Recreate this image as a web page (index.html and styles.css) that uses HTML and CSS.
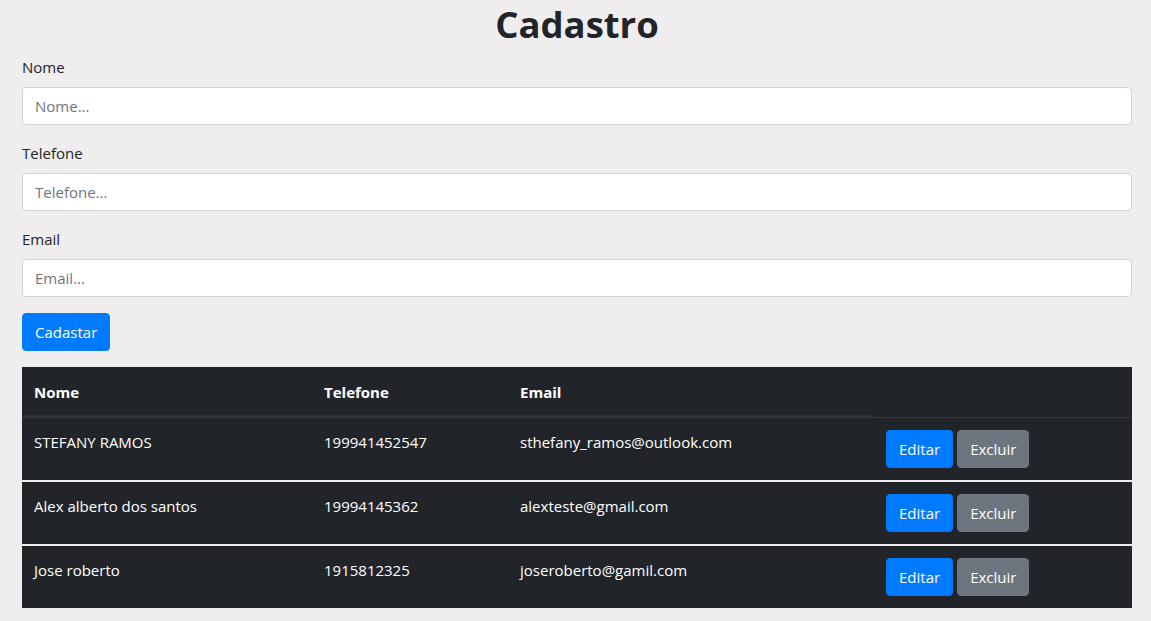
FILE: index.html
```html
<!DOCTYPE html>
<html lang="pt-BR">
<head>
<meta charset="utf-8">
<title>Cadastro</title>
<link rel="stylesheet" href="styles.css">
</head>
<body>
<div class="container">
  <h1 class="title">Cadastro</h1>
  <form class="form">
    <div class="form-group">
      <label class="label" for="nome">Nome</label>
      <input class="input" id="nome" type="text" placeholder="Nome...">
    </div>
    <div class="form-group">
      <label class="label" for="tel">Telefone</label>
      <input class="input" id="tel" type="text" placeholder="Telefone...">
    </div>
    <div class="form-group">
      <label class="label" for="email">Email</label>
      <input class="input" id="email" type="text" placeholder="Email...">
    </div>
    <button type="button" class="btn btn-primary">Cadastar</button>
  </form>
  <table class="table">
    <colgroup>
      <col class="c1"><col class="c2"><col class="c3"><col class="c4">
    </colgroup>
    <thead>
      <tr><th>Nome</th><th>Telefone</th><th>Email</th></tr>
    </thead>
    <tbody>
      <tr>
        <td>STEFANY RAMOS</td>
        <td>199941452547</td>
        <td>sthefany_ramos@outlook.com</td>
        <td><div class="actions"><button class="btn btn-primary">Editar</button><button class="btn btn-secondary">Excluir</button></div></td>
      </tr>
      <tr>
        <td>Alex alberto dos santos</td>
        <td>19994145362</td>
        <td>alexteste@gmail.com</td>
        <td><div class="actions"><button class="btn btn-primary">Editar</button><button class="btn btn-secondary">Excluir</button></div></td>
      </tr>
      <tr>
        <td>Jose roberto</td>
        <td>1915812325</td>
        <td>joseroberto@gamil.com</td>
        <td><div class="actions"><button class="btn btn-primary">Editar</button><button class="btn btn-secondary">Excluir</button></div></td>
      </tr>
    </tbody>
  </table>
</div>
</body>
</html>
```

FILE: styles.css
```css
* { box-sizing: border-box; }
html, body {
  margin: 0;
  padding: 0;
  background: #efeded;
}
body {
  font-family: "Open Sans", "Noto Sans", sans-serif;
  font-size: 15px;
  line-height: 24px;
  color: #212529;
}
.container {
  width: 1110px;
  margin-left: 22px;
}
.title {
  margin: 0 0 7px;
  font-size: 36.5px;
  line-height: 48px;
  font-weight: 700;
  text-align: center;
  color: #212529;
}
.form-group {
  margin-bottom: 16px;
}
.label {
  display: block;
  margin-bottom: 8px;
}
.input {
  display: block;
  width: 100%;
  height: 38px;
  padding: 6px 12px;
  font-family: inherit;
  font-size: 15px;
  line-height: 24px;
  color: #495057;
  background: #fff;
  border: 1px solid #ced4da;
  border-radius: 4px;
  outline: none;
}
.input::placeholder {
  color: #6c757d;
  opacity: 1;
}
.btn {
  display: inline-block;
  height: 38px;
  padding: 6px 12px;
  font-family: inherit;
  font-size: 15px;
  line-height: 24px;
  color: #fff;
  border: 1px solid transparent;
  border-radius: 4px;
  cursor: pointer;
}
.btn-primary {
  background: #007bff;
  border-color: #007bff;
}
.btn-secondary {
  background: #6c757d;
  border-color: #6c757d;
}
.form {
  margin-bottom: 16px;
}
.table {
  width: 100%;
  border-collapse: separate;
  border-spacing: 0;
  background: #212529;
  color: #fff;
  table-layout: fixed;
}
.c1 { width: 290px; }
.c2 { width: 196px; }
.c3 { width: 366px; }
.c4 { width: 258px; }
.table th,
.table td {
  padding: 12px;
  text-align: left;
  vertical-align: top;
}
.table th {
  padding-top: 13px;
  padding-bottom: 11px;
  font-weight: 700;
  border-bottom: 2px solid #2b3035;
}
.table tbody tr:first-child td {
  border-top: 1px solid #32383e;
}
.table tbody tr td {
  border-bottom: 2px solid #efeded;
}
.table tbody tr:last-child td {
  border-bottom: 0;
}
.actions {
  display: flex;
  gap: 4px;
}
```
